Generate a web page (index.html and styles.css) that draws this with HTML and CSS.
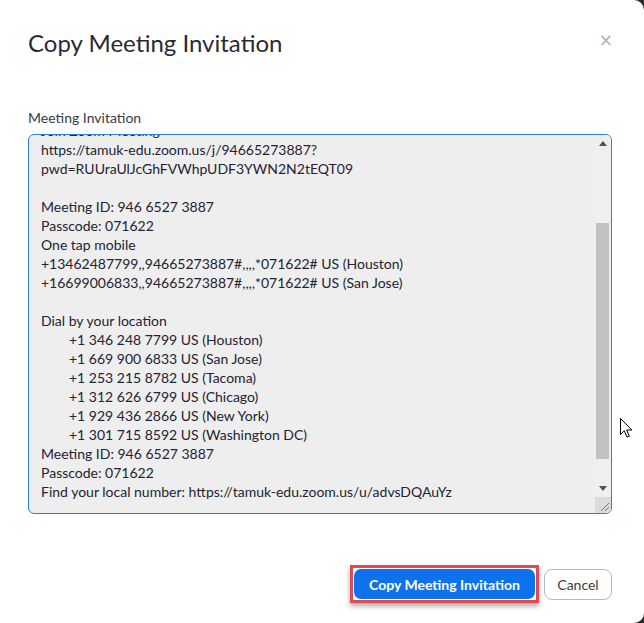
FILE: index.html
```html
<!DOCTYPE html>
<html>
<head>
<meta charset="utf-8">
<link rel="stylesheet" href="styles.css">
</head>
<body>
<div class="dialog">
  <div class="header">
    <h1 class="title">Copy Meeting Invitation</h1>
    <span class="close">×</span>
  </div>
  <div class="label">Meeting Invitation</div>
  <div class="textbox">
    <div class="viewport">
      <div class="content">
        <div class="line">Join Zoom Meeting</div>
        <div class="line">https://tamuk-edu.zoom.us/j/94665273887?</div>
        <div class="line">pwd=RUUraUlJcGhFVWhpUDF3YWN2N2tEQT09</div>
        <div class="line">&nbsp;</div>
        <div class="line">Meeting ID: 946 6527 3887</div>
        <div class="line">Passcode: 071622</div>
        <div class="line">One tap mobile</div>
        <div class="line">+13462487799,,94665273887#,,,,*071622# US (Houston)</div>
        <div class="line">+16699006833,,94665273887#,,,,*071622# US (San Jose)</div>
        <div class="line">&nbsp;</div>
        <div class="line">Dial by your location</div>
        <div class="line indent">+1 346 248 7799 US (Houston)</div>
        <div class="line indent">+1 669 900 6833 US (San Jose)</div>
        <div class="line indent">+1 253 215 8782 US (Tacoma)</div>
        <div class="line indent">+1 312 626 6799 US (Chicago)</div>
        <div class="line indent">+1 929 436 2866 US (New York)</div>
        <div class="line indent">+1 301 715 8592 US (Washington DC)</div>
        <div class="line">Meeting ID: 946 6527 3887</div>
        <div class="line">Passcode: 071622</div>
        <div class="line">Find your local number: https://tamuk-edu.zoom.us/u/advsDQAuYz</div>
      </div>
    </div>
    <div class="scrollbar">
      <div class="sb-btn"><span class="arrow-up"></span></div>
      <div class="sb-track">
        <div class="sb-thumb"></div>
      </div>
      <div class="sb-btn"><span class="arrow-down"></span></div>
      <div class="resizer">
        <svg width="16" height="16" viewBox="0 0 16 16"><path d="M6 14 L14 6 M10 14 L14 10" stroke="#777" stroke-width="1" fill="none"/></svg>
      </div>
    </div>
  </div>
  <div class="footer">
    <div class="highlight">
      <button class="btn primary">Copy Meeting Invitation</button>
    </div>
    <button class="btn secondary">Cancel</button>
  </div>
  <svg class="pointer" width="14" height="21" viewBox="0 0 14 21"><path d="M0.5 0.5 L0.5 16.5 L4.3 12.8 L7 19.2 L9.3 18.2 L6.7 12 L11.8 12 Z" fill="#fff" stroke="#000" stroke-width="1" stroke-linejoin="miter"/></svg>
</div>
</body>
</html>
```

FILE: styles.css
```css
* { box-sizing: border-box; }
html, body {
  margin: 0;
  padding: 0;
  background: #2a2a2a;
}
body {
  font-family: Lato, "Open Sans", sans-serif;
  color: #232333;
}
.dialog {
  position: relative;
  width: 644px;
  height: 623px;
  background: #ffffff;
  border-top-right-radius: 10px;
  border-bottom-right-radius: 10px;
  padding: 0 32px 0 28px;
  display: flex;
  flex-direction: column;
}
.header {
  display: flex;
  justify-content: space-between;
  align-items: center;
  height: 86px;
}
.title {
  margin: 0;
  font-weight: 400;
  font-size: 24px;
  line-height: 30px;
  color: #2a2a36;
}
.close {
  font-size: 17px;
  color: #b0b0b0;
  margin-right: -1px;
  margin-top: -6px;
  font-family: "DejaVu Sans", sans-serif;
}
.label {
  font-size: 14px;
  line-height: 18px;
  color: #3a3a44;
  margin-top: 23px;
  height: 25px;
}
.textbox {
  height: 380px;
  border: 1px solid #2a7fe6;
  border-radius: 6px;
  background: #eeeeee;
  display: flex;
  overflow: hidden;
}
.viewport {
  flex: 1;
  overflow: hidden;
  padding-left: 12px;
}
.content {
  margin-top: -14px;
  font-size: 14px;
  line-height: 19px;
  color: #232333;
}
.line { white-space: nowrap; }
.indent { padding-left: 28px; }
.scrollbar {
  width: 16px;
  display: flex;
  flex-direction: column;
  background: #efefef;
}
.sb-btn {
  height: 17px;
  display: flex;
  align-items: center;
  justify-content: center;
}
.arrow-up {
  width: 0; height: 0;
  border-left: 4px solid transparent;
  border-right: 4px solid transparent;
  border-bottom: 5px solid #505050;
}
.arrow-down {
  width: 0; height: 0;
  border-left: 4px solid transparent;
  border-right: 4px solid transparent;
  border-top: 5px solid #505050;
}
.sb-track {
  flex: 1;
  padding-top: 71px;
  padding-left: 1px;
  padding-right: 2px;
}
.sb-thumb {
  height: 236px;
  background: #c1c1c1;
}
.resizer {
  height: 16px;
  background: #dcdcdc;
}
.resizer svg { display: block; }
.footer {
  display: flex;
  justify-content: flex-end;
  align-items: center;
  margin-top: 51px;
  gap: 5px;
}
.highlight {
  border: 3px solid #e04a4f;
  padding: 1px 1px;
  box-shadow: 0 3px 5px rgba(0,0,0,0.35);
}
.btn {
  font-family: Lato, "Open Sans", sans-serif;
  font-size: 14px;
  height: 30px;
  border-radius: 7px;
  cursor: default;
}
.primary {
  display: block;
  width: 181px;
  background: #0e72ed;
  color: #ffffff;
  border: none;
  font-weight: 700;
  padding: 0;
}
.secondary {
  width: 68px;
  height: 31px;
  background: #ffffff;
  color: #3c3c44;
  border: 1px solid #b8b8c0;
  border-radius: 8px;
  padding: 0;
}
.pointer {
  position: absolute;
  left: 620px;
  top: 418px;
}
```
